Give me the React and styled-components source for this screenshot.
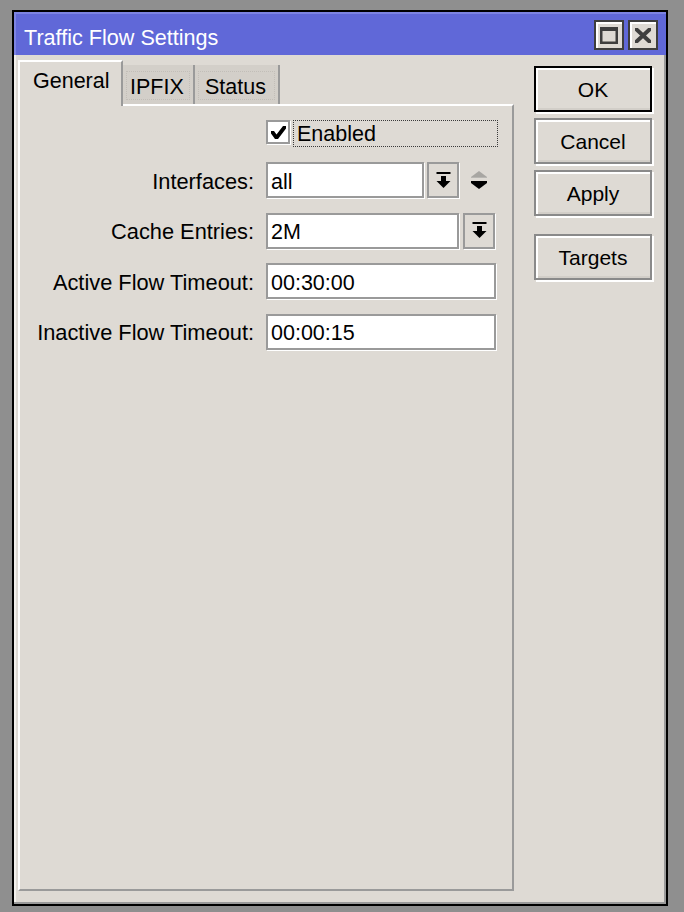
import React from 'react';
import styled, { createGlobalStyle } from 'styled-components';

const Global = createGlobalStyle`
  html, body { margin: 0; padding: 0; background: #8f8f8f; }
  body {
    width: 684px; height: 912px; overflow: hidden;
    font-family: "Liberation Sans", Arial, sans-serif;
    font-size: 21.5px; color: #000;
  }
  * { box-sizing: border-box; }
`;

const FACE = '#dedad4';
const EDGE = '#9a9a9a';

const Window = styled.div`
  margin: 10px 0 0 12px;
  width: 656px;
  height: 896px;
  border: 2px solid #000;
  background: ${FACE};
  display: flex;
  flex-direction: column;
`;

const TitleBar = styled.div`
  height: 43px;
  flex: none;
  background: #6068d8;
  box-shadow: inset 2px 2px 0 #7d84e2;
  display: flex;
  align-items: flex-start;
  padding: 0 8px 0 10px;
`;

const TitleText = styled.div`
  flex: 1;
  color: #fff;
  line-height: 24px;
  margin-top: 14px;
  font-size: 21.6px;
`;

const TitleButtons = styled.div`
  display: flex;
  gap: 4px;
  margin-top: 8px;
`;

const TitleButton = styled.div`
  width: 30px;
  height: 30px;
  background: ${FACE};
  border: 2px solid #3e3e3e;
  box-shadow: inset 2px 2px 0 #fff;
  display: flex;
  align-items: center;
  justify-content: center;
`;

const Body = styled.div`
  flex: 1;
  display: flex;
  gap: 20px;
  padding: 5px 14px 0 4px;
  box-shadow: inset -2px -2px 0 ${EDGE}, inset 2px 0 0 #f2f0ec;
`;

const LeftColumn = styled.div`
  width: 496px;
  display: flex;
  flex-direction: column;
`;

const TabStrip = styled.div`
  height: 44px;
  display: flex;
  align-items: flex-end;
`;

const Tab = styled.div`
  position: relative;
  height: ${p => (p.$active ? '46px' : '39px')};
  margin-bottom: ${p => (p.$active ? '-2px' : '0')};
  z-index: ${p => (p.$active ? 1 : 0)};
  width: ${p => p.$w}px;
  background: ${p => (p.$active ? FACE : '#d3cfc9')};
  border-right: 2px solid ${EDGE};
  border-left: ${p => (p.$active ? '2px solid #fff' : 'none')};
  border-top: ${p => (p.$active ? '2px solid #fff' : 'none')};
  padding-left: ${p => p.$pad}px;
  padding-top: ${p => (p.$active ? '7px' : '10px')};
  line-height: 24px;
  white-space: nowrap;
  &::after {
    content: '';
    display: ${p => (p.$active ? 'none' : 'block')};
    position: absolute;
    left: 3px; right: 3px; top: 6px; bottom: 4px;
    border: 1px dotted #c2beb8;
    pointer-events: none;
  }
`;

const Panel = styled.div`
  height: 787px;
  border-top: 2px solid #fff;
  border-left: 2px solid #fff;
  border-right: 2px solid ${EDGE};
  border-bottom: 2px solid ${EDGE};
  padding-top: 14px;
`;

const Form = styled.div`
  display: grid;
  grid-template-columns: 234px 230px;
  grid-template-rows: 27.5px;
  grid-auto-rows: 36px;
  column-gap: 12px;
  row-gap: 14.5px;
  align-items: center;
`;

const Label = styled.div`
  text-align: right;
  line-height: 24px;
  padding-top: 3px;
  white-space: nowrap;
  font-size: 21.8px;
`;

const CheckRow = styled.div`
  display: flex;
  align-items: flex-start;
  gap: 3px;
  height: 27.5px;
`;

const CheckBox = styled.div`
  width: 24px;
  height: 24px;
  flex: none;
  background: #fff;
  border: 2px solid ${EDGE};
  box-shadow: 1px 1px 0 #fff;
  display: flex;
  align-items: center;
  justify-content: center;
`;

const FocusLabel = styled.div`
  width: 205px;
  height: 27px;
  flex: none;
  border: 1px dotted #3a3a3a;
  padding-left: 3px;
  line-height: 24px;
  padding-top: 1px;
`;

const FieldRow = styled.div`
  display: flex;
  align-items: center;
  gap: ${p => p.$gap || 3}px;
  height: 36px;
`;

const Input = styled.div`
  width: ${p => p.$w}px;
  height: 36px;
  flex: none;
  background: #fff;
  border: 2px solid ${EDGE};
  box-shadow: 1px 1px 0 #fff;
  padding: 3px 0 0 3px;
  display: flex;
  align-items: center;
  line-height: 24px;
  white-space: nowrap;
`;

const DropButton = styled.div`
  width: 32px;
  height: 36px;
  flex: none;
  background: ${FACE};
  border: 2px solid ${EDGE};
  box-shadow: 1px 1px 0 #fff;
  display: flex;
  align-items: center;
  justify-content: center;
`;

const Spinner = styled.div`
  width: 22px;
  height: 36px;
  margin-left: 6px;
  display: flex;
  align-items: center;
  justify-content: center;
`;

const ButtonColumn = styled.div`
  width: 118px;
  display: flex;
  flex-direction: column;
  padding-top: 6px;
`;

const Button = styled.div`
  height: 46px;
  margin-bottom: 6px;
  margin-top: ${p => p.$gapTop || 0}px;
  background: ${FACE};
  border: 2px solid ${p => (p.$default ? '#000' : '#8a8a8a')};
  box-shadow: inset 2px 2px 0 #fff, inset 0 -2px 0 #d2cec8, 2px 2px 0 #fff;
  display: flex;
  align-items: center;
  justify-content: center;
  line-height: 24px;
  padding-top: 2px;
  font-size: 21px;
`;

const DropIcon = () => (
  <svg width="15" height="17" viewBox="0 0 15 17">
    <rect x="0.5" y="0" width="14" height="2" fill="#000" />
    <rect x="5" y="4" width="5" height="5" fill="#000" />
    <polygon points="0.5,9 14.5,9 7.5,16" fill="#000" />
  </svg>
);

const SpinIcon = () => (
  <svg width="18" height="19" viewBox="0 0 18 19">
    <polygon points="9,0 17,6 1,6" fill="#a8a6a2" />
    <rect x="1" y="6" width="16" height="1" fill="#b8b6b2" />
    <rect x="1" y="10" width="16" height="2" fill="#000" />
    <polygon points="1,12 17,12 9,18" fill="#000" />
  </svg>
);

const CheckIcon = () => (
  <svg width="17" height="15" viewBox="0 0 17 15">
    <polygon points="1,6 4,6 6.5,9.5 13,1 16,1 16,3.5 8,14 5,14 1,8.5" fill="#000" />
  </svg>
);

const MaxIcon = () => (
  <svg width="18" height="17" viewBox="0 0 18 17">
    <rect x="0" y="0" width="18" height="4" fill="#3e3e3e" />
    <rect x="0" y="0" width="2.5" height="17" fill="#3e3e3e" />
    <rect x="15.5" y="0" width="2.5" height="17" fill="#3e3e3e" />
    <rect x="0" y="14.5" width="18" height="2.5" fill="#3e3e3e" />
  </svg>
);

const CloseIcon = () => (
  <svg width="16" height="15" viewBox="0 0 16 15">
    <path d="M1.5 1.5 L14.5 13.5 M14.5 1.5 L1.5 13.5" stroke="#3e3e3e" strokeWidth="4" strokeLinecap="square" />
  </svg>
);

export default function App() {
  return (
    <>
      <Global />
      <Window>
        <TitleBar>
          <TitleText>Traffic Flow Settings</TitleText>
          <TitleButtons>
            <TitleButton><MaxIcon /></TitleButton>
            <TitleButton><CloseIcon /></TitleButton>
          </TitleButtons>
        </TitleBar>
        <Body>
          <LeftColumn>
            <TabStrip>
              <Tab $active $w={105} $pad={13}>General</Tab>
              <Tab $w={72} $pad={7}>IPFIX</Tab>
              <Tab $w={85} $pad={10}>Status</Tab>
            </TabStrip>
            <Panel>
              <Form>
                <div />
                <CheckRow>
                  <CheckBox><CheckIcon /></CheckBox>
                  <FocusLabel>Enabled</FocusLabel>
                </CheckRow>

                <Label>Interfaces:</Label>
                <FieldRow>
                  <Input $w={158}>all</Input>
                  <DropButton><DropIcon /></DropButton>
                  <Spinner><SpinIcon /></Spinner>
                </FieldRow>

                <Label>Cache Entries:</Label>
                <FieldRow $gap={4}>
                  <Input $w={193}>2M</Input>
                  <DropButton><DropIcon /></DropButton>
                </FieldRow>

                <Label>Active Flow Timeout:</Label>
                <FieldRow>
                  <Input $w={230}>00:30:00</Input>
                </FieldRow>

                <Label>Inactive Flow Timeout:</Label>
                <FieldRow>
                  <Input $w={230}>00:00:15</Input>
                </FieldRow>
              </Form>
            </Panel>
          </LeftColumn>
          <ButtonColumn>
            <Button $default>OK</Button>
            <Button>Cancel</Button>
            <Button>Apply</Button>
            <Button $gapTop={12}>Targets</Button>
          </ButtonColumn>
        </Body>
      </Window>
    </>
  );
}
